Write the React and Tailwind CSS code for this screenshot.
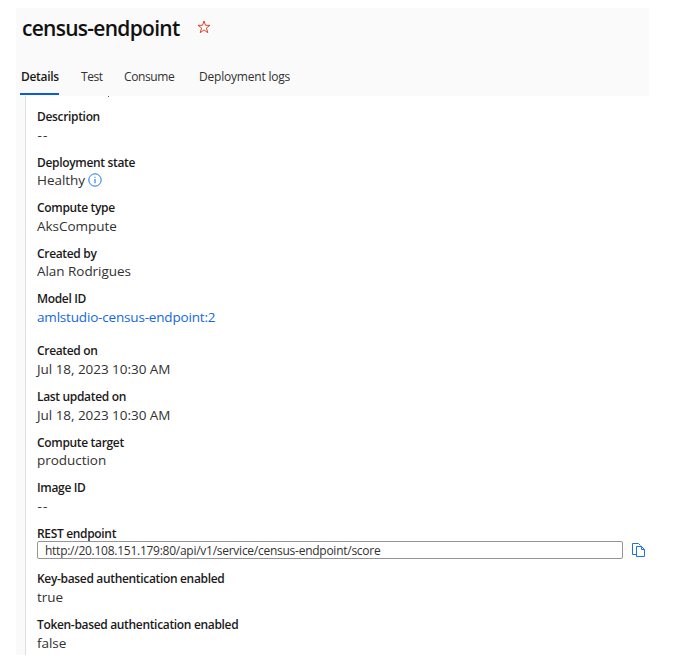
const tabs = [
  { name: 'Details', cls: 'w-[39px] pl-px tracking-[-0.3px] font-semibold text-[#1b1a19]' },
  { name: 'Test', cls: 'w-[22px] -ml-px pl-px tracking-[-0.4px] text-[#323130]' },
  { name: 'Consume', cls: 'w-[53px] tracking-[-0.4px] text-[#323130]' },
  { name: 'Deployment logs', cls: 'w-[92px] tracking-[-0.2px] text-[#323130]' },
];

const fields = [
  { label: 'Description', value: '--' },
  { label: 'Deployment state', value: 'Healthy', info: true },
  { label: 'Compute type', value: 'AksCompute' },
  { label: 'Created by', value: 'Alan Rodrigues' },
  { label: 'Model ID', value: 'amlstudio-census-endpoint:2', link: true },
  { label: 'Created on', value: 'Jul 18, 2023 10:30 AM' },
  { label: 'Last updated on', value: 'Jul 18, 2023 10:30 AM' },
  { label: 'Compute target', value: 'production' },
  { label: 'Image ID', value: '--' },
  { label: 'REST endpoint', value: 'http://20.108.151.179:80/api/v1/service/census-endpoint/score', copy: true },
  { label: 'Key-based authentication enabled', value: 'true' },
  { label: 'Token-based authentication enabled', value: 'false' },
];

function Star() {
  return (
    <svg className="mt-[12px] ml-[17px] h-[14px] w-[14px] shrink-0" viewBox="0 0 14 14" fill="none" stroke="#d6492a" strokeWidth="1">
      <path d="M7 1 L8.5 5.3 H13 L9.4 8 L10.8 12.7 L7 9.9 L3.2 12.7 L4.6 8 L1 5.3 H5.5 Z" />
    </svg>
  );
}

function Info() {
  return (
    <svg className="mb-[1px] ml-[3px] h-[14px] w-[14px] shrink-0" viewBox="0 0 14 14" fill="none" stroke="#1f74ea">
      <circle cx="7" cy="7" r="6.2" strokeWidth="1" />
      <path d="M7 6V10.3M7 3.7V4.8" strokeWidth="1.1" />
    </svg>
  );
}

function Copy() {
  return (
    <svg className="ml-[9px] h-[15px] w-[14px] shrink-0" viewBox="0 0 14 15" fill="none" stroke="#1f6fe8" strokeWidth="1">
      <path d="M4.5 11.5H0.5V0.5H6.5L8.5 2.5" />
      <path d="M4.5 3.5H9.5L12.5 6.5V13.5H4.5Z" fill="#fff" />
      <path d="M9.5 3.5V6.5H12.5" />
    </svg>
  );
}

function Value({ field }) {
  if (field.copy) {
    return (
      <div className="-mt-[1.4px] mb-[1.4px] flex h-[18px] items-center">
        <div className="flex h-[18px] w-[586px] shrink-0 items-center rounded-[2px] border border-[#979593] bg-white pt-[2px] pl-[7px] text-[12px] tracking-[-0.26px] text-[#323130]">
          {field.value}
        </div>
        <Copy />
      </div>
    );
  }
  if (field.value === '--') {
    return <div className="h-[18px] pl-[0.5px] tracking-[1.1px] text-[#323130]">--</div>;
  }
  return (
    <div
      className={
        field.link
          ? 'flex h-[18px] items-center tracking-[-0.18px] text-[#1468e0]'
          : 'flex h-[18px] items-center tracking-[-0.04px] text-[#323130]'
      }
    >
      <span>{field.value}</span>
      {field.info && <Info />}
    </div>
  );
}

export default function App() {
  return (
    <div className="h-[660px] w-[699px] overflow-hidden bg-white pt-[8px] pl-[16px] font-['Open_Sans','Noto_Sans',sans-serif]">
      <header className="h-[88px] w-[633px] bg-[#fafafa]">
        <div className="flex h-[56px] pl-[6px]">
          <h1 className="h-[40px] text-[21px] leading-[40px] font-semibold tracking-[-0.72px] whitespace-nowrap text-[#111]">census-endpoint</h1>
          <Star />
        </div>
        <nav className="flex h-[32px] gap-[22px] pl-[4px] text-[12px] leading-[25px] whitespace-nowrap">
          {tabs.map((tab, i) => (
            <div key={tab.name} className={i === 0 ? 'h-[31px] border-b-2 border-[#0f5bd7]' : 'h-[31px]'}>
              <div className={tab.cls}>{tab.name}</div>
            </div>
          ))}
        </nav>
      </header>
      <main className="h-[559px] w-[633px] overflow-hidden bg-[#fafafa] pl-[9px]">
        <div className="h-full border-l border-[#dedede] bg-white pl-[11px]">
          <div className="ml-[71px] h-px w-px bg-[#555]" />
          <div className="flex flex-col gap-[9.6px] pt-[11px]">
            {fields.map((field) => (
              <div key={field.label} className={field.link ? 'mb-[6.4px]' : ''}>
                <div className="h-[18px] text-[12px] leading-[18px] font-semibold tracking-[-0.33px] whitespace-nowrap text-[#1b1a19]">{field.label}</div>
                <div className="-mt-[0.4px] mb-[0.4px] text-[13.5px] leading-[18px] whitespace-nowrap">
                  <Value field={field} />
                </div>
              </div>
            ))}
          </div>
        </div>
      </main>
    </div>
  );
}
